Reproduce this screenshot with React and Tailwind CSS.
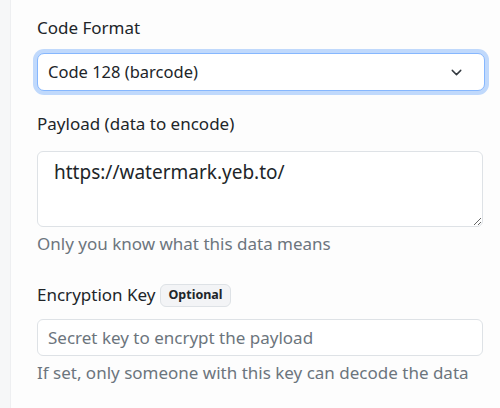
import { ChevronDown } from "lucide-react";

const font = { fontFamily: '"Noto Sans", "Open Sans", sans-serif' };

const Label = ({ children }) => (
  <label className="block text-[17px] leading-6 text-[#212529]">{children}</label>
);

const Help = ({ children }) => (
  <p className="text-[17px] leading-6 text-[#6c757d] mt-[5px]">{children}</p>
);

export default function App() {
  return (
    <div className="flex w-[500px] h-[408px] bg-[#fdfdfd] overflow-hidden" style={font}>
      <div className="w-[11px] shrink-0 bg-[#f6f7f8] border-r border-[#eeeff1]" />

      <div className="flex-1 pl-[26px] pr-[15px] pt-[16px]">
        {/* Code format */}
        <Label>Code Format</Label>
        <div className="mt-[13px] relative rounded-[7px] border border-[#86b7fe] bg-white h-[38px] flex items-center pl-[10px] pr-[19px] shadow-[0_0_0_4px_rgba(13,110,253,0.25)]">
          <span className="flex-1 text-[16.5px] text-[#212529]">Code 128 (barcode)</span>
          <ChevronDown className="w-[17px] h-[17px] text-[#343a40]" strokeWidth={2} />
        </div>

        {/* Payload */}
        <div className="mt-[21px]">
          <Label>Payload (data to encode)</Label>
          <textarea
            className="mt-[15px] block w-[446px] h-[76px] rounded-[6px] border border-[#dee2e6] bg-white px-[16px] pt-[6px] text-[19px] text-[#212529] outline-none"
            style={font}
            defaultValue="https://watermark.yeb.to/"
          />
          <Help>Only you know what this data means</Help>
        </div>

        {/* Encryption key */}
        <div className="mt-[27px]">
          <div className="flex items-center gap-[5px]">
            <Label>Encryption Key</Label>
            <span className="inline-flex items-center h-[23px] px-[7px] rounded-[6px] border border-[#dee2e6] bg-[#f3f4f6] text-[12.5px] font-bold text-[#212529]">
              Optional
            </span>
          </div>
          <input
            className="mt-[12px] block w-[446px] h-[37px] rounded-[6px] border border-[#dee2e6] bg-white px-[10px] text-[17px] text-[#212529] placeholder:text-[#6c757d] outline-none"
            style={font}
            placeholder="Secret key to encrypt the payload"
          />
          <Help>If set, only someone with this key can decode the data</Help>
        </div>
      </div>
    </div>
  );
}
